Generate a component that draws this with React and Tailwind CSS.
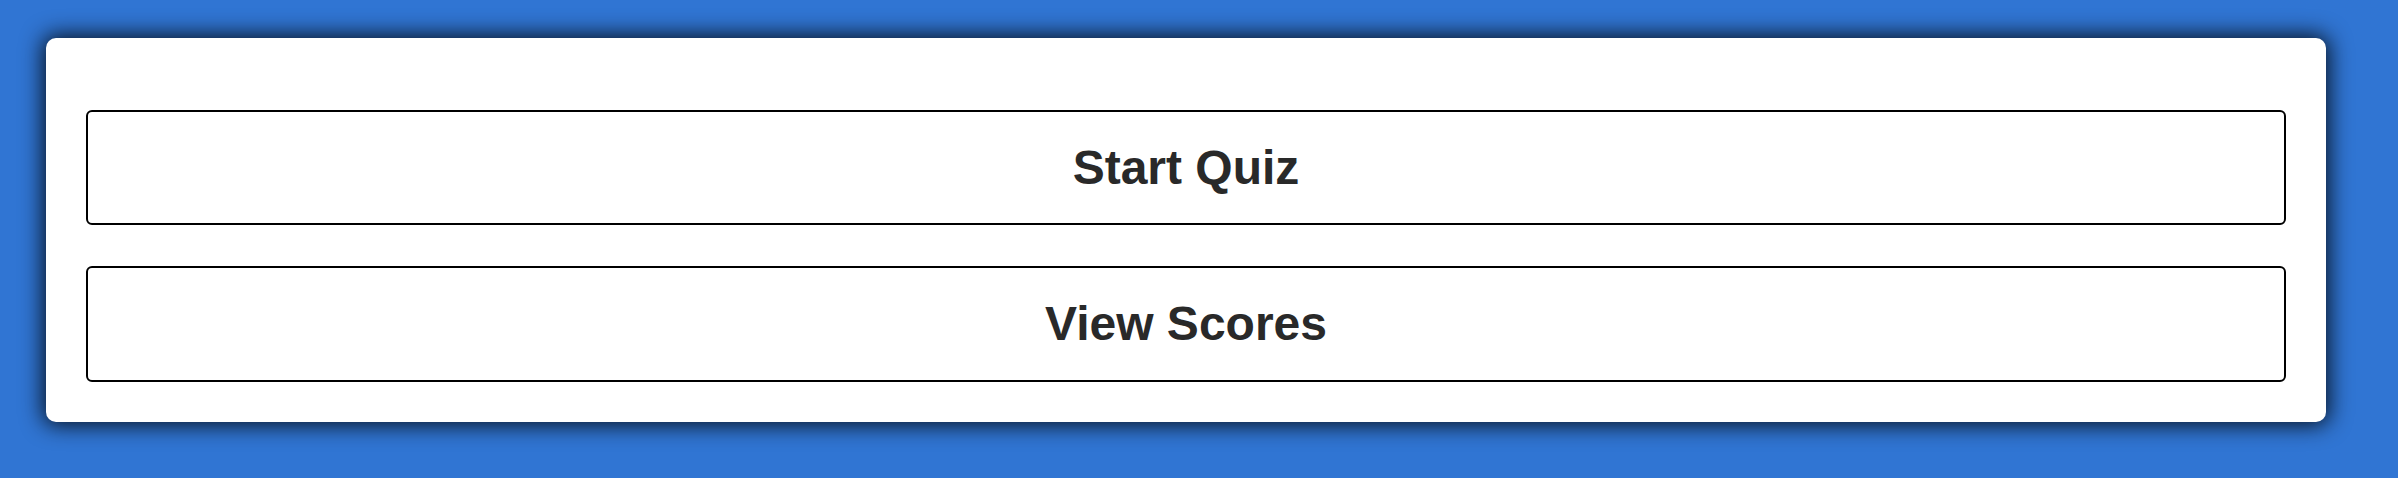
export default function App() {
  return (
    <div className="min-h-screen bg-[#3075d3] pl-[46px] pr-[72px] pt-[38px] pb-[56px] font-['Liberation_Sans',Arial,sans-serif]">
      <div className="bg-white rounded-[10px] shadow-[0_0_22px_3px_rgba(0,0,0,0.85)] px-[40px] pt-[72px] pb-[40px] flex flex-col gap-[41px]">
        <button className="h-[115px] w-full border-2 border-black rounded-[6px] bg-white text-[48px] font-bold text-[#292929]">
          Start Quiz
        </button>
        <button className="h-[116px] w-full border-2 border-black rounded-[6px] bg-white text-[48px] font-bold text-[#292929]">
          View Scores
        </button>
      </div>
    </div>
  )
}
